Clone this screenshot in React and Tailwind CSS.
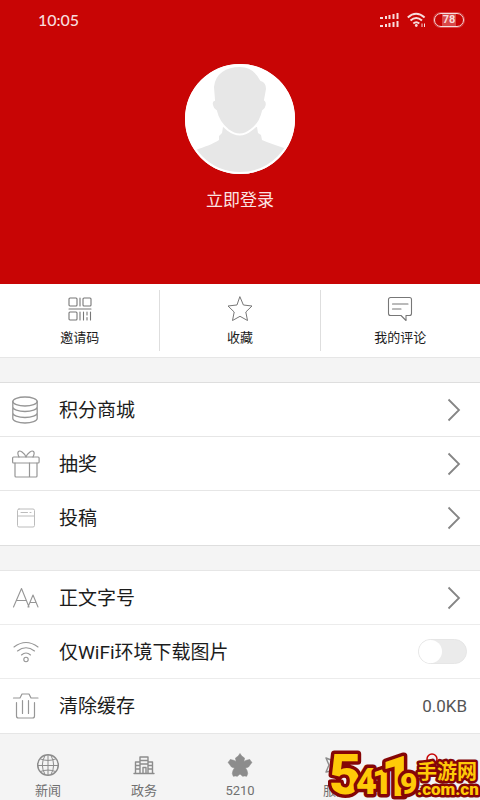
import React from "react";

const line = { fill: "none", stroke: "currentColor", strokeLinecap: "round", strokeLinejoin: "round" };

function QrIcon() {
  return (
    <svg width="24" height="24" viewBox="0 0 24 24" {...line} strokeWidth="1.1" aria-hidden="true">
      <rect x="1" y="1" width="8" height="8" rx="1" />
      <rect x="15" y="1" width="8" height="8" rx="1" />
      <path d="M12 1v8M1 12h22M12 15v8M15.500 15v8M19 15v3M19 20.500v2.500M22.500 15v8" />
      <rect x="1" y="15" width="8" height="8" rx="1" />
    </svg>
  );
}

function StarIcon() {
  return (
    <svg width="26" height="26" viewBox="0 0 26 26" {...line} strokeWidth="1" aria-hidden="true">
      <path d="M13 1l3.400 8 8.600 1-6.200 6 1.700 8.500L13 20.300 5.500 24.500 7.200 16 1 10l8.600-1z" />
    </svg>
  );
}

function CommentIcon() {
  return (
    <svg width="26" height="26" viewBox="0 0 26 26" {...line} strokeWidth="1.1" aria-hidden="true">
      <path d="M3.500 1.500h19a2 2 0 0 1 2 2v14a2 2 0 0 1-2 2H19v5l-5-5H3.500a2 2 0 0 1-2-2v-14a2 2 0 0 1 2-2zM5.500 8h15.500M5.500 13h8.500" />
    </svg>
  );
}

function CoinsIcon() {
  return (
    <svg width="28" height="28" viewBox="0 0 28 28" {...line} strokeWidth="1.300" aria-hidden="true">
      <ellipse cx="13" cy="5.500" rx="12.200" ry="4.500" />
      <path d="M.8 5.500v17c0 2.500 5.500 4.500 12.200 4.500s12.200-2 12.200-4.500v-17M.8 11c0 2.500 5.500 4.500 12.200 4.500s12.200-2 12.200-4.500M.8 17c0 2.500 5.500 4.500 12.200 4.500s12.200-2 12.200-4.500" />
    </svg>
  );
}

function GiftIcon() {
  return (
    <svg width="28" height="28" viewBox="0 0 28 28" {...line} strokeWidth="1.200" aria-hidden="true">
      <rect x=".6" y="7" width="26.500" height="6" rx="1" />
      <path d="M3 13v13a1 1 0 0 0 1 1h20a1 1 0 0 0 1-1V13M17.500 13v14M14 7C12 2.500 8 0 6.500 1.500 5 3 6 5 7 7M14 7c2-4.500 6-7 7.500-5.500C23 3 22 5 21 7" />
    </svg>
  );
}

function DraftIcon() {
  return (
    <svg width="28" height="28" viewBox="0 0 28 28" {...line} strokeWidth="1" className="text-[#bcbcbc]" aria-hidden="true">
      <rect x="5.500" y="5" width="17" height="18" rx="1.500" />
      <path d="M5.500 12h17M9 8.500h6.500M18 8.500h1" />
    </svg>
  );
}

function LettersIcon() {
  return (
    <svg width="28" height="28" viewBox="0 0 28 28" {...line} strokeWidth="1.100" aria-hidden="true">
      <path d="M1.500 23L9.500 4.500 17 23M4.500 16.500h10M16 23l5-12 5 12M18 18.500h6" />
    </svg>
  );
}

function WifiIcon() {
  return (
    <svg width="28" height="28" viewBox="0 0 28 28" {...line} strokeWidth="1.100" aria-hidden="true">
      <path d="M2 9q12-9 24 0M5.500 13q8.500-6.500 17 0M9.500 17q4.500-4 9 0" />
      <circle cx="14" cy="21.500" r="2.200" />
    </svg>
  );
}

function TrashIcon() {
  return (
    <svg width="28" height="28" viewBox="0 0 28 28" {...line} strokeWidth="1.200" aria-hidden="true">
      <path d="M1.500 6H8l2-4h7l2 4h7M4.500 10.500V24a2 2 0 0 0 2 2h14a2 2 0 0 0 2-2V10.500M10.500 8.500v13M16.500 8.500v13" />
    </svg>
  );
}

function GlobeIcon() {
  return (
    <svg width="24" height="24" viewBox="0 0 24 24" {...line} strokeWidth="1" aria-hidden="true">
      <circle cx="12" cy="12" r="10.300" strokeWidth="1.500" />
      <path d="M12 2v20M2 12.500h20M4.500 6q7.500 3 15 0M4.500 18.500q7.500-3 15 0M9 2.500Q3.500 12 9 21.500M15 2.500q5.500 9.500 0 19" />
    </svg>
  );
}

function BuildingIcon() {
  return (
    <svg width="24" height="24" viewBox="0 0 24 24" {...line} strokeWidth="1.400" aria-hidden="true">
      <path d="M2 20.500h20M3.500 20V9H8M20.500 20V9H16M8 20V4h8v16M8 7.500h8M8 11h8M3.500 12.500H8M3.500 16H8M16 12.500h4.500M16 16h4.500M11 20v-5.500h3V20" />
    </svg>
  );
}

function FlowerIcon() {
  return (
    <svg width="26" height="26" viewBox="0 0 26 26" fill="currentColor" stroke="currentColor" strokeWidth=".6" strokeLinejoin="round" aria-hidden="true">
      <path d="M13 1.500l1.700 2.500 2.800 2-.6 3.500 2.500-1.200 3.400-.8.700 1.500 1.500 1.300-1.500 2L21.500 15 18.500 16l1.500 2.500.7 3-1 2.800-2-.4-2 .4L13 22l-2.700 2.300-2-.4-2 .4-1-2.800.7-3L7.500 16l-3-1-2-2.700L1 10.300 2.500 9l.7-1.500 3.400.8 2.500 1.200L8.500 6l2.800-2z" />
    </svg>
  );
}

function ServiceIcon() {
  return (
    <svg width="24" height="24" viewBox="0 0 24 24" {...line} strokeWidth="1.400" aria-hidden="true">
      <path d="M2 5l5 2 5-5 5 5 5-2-3 7 3 7-5-1-5 4-5-4-5 1 3-7z" />
    </svg>
  );
}

function PersonIcon() {
  return (
    <svg width="24" height="24" viewBox="0 0 24 24" {...line} strokeWidth="1.500" className="text-[#c80505]" aria-hidden="true">
      <circle cx="12" cy="6" r="5" />
      <path d="M2 22q1-9 10-9t10 9z" />
    </svg>
  );
}

function Chevron() {
  return (
    <svg width="14" height="24" viewBox="0 0 14 24" fill="none" stroke="#858585" strokeWidth="1.800" aria-hidden="true">
      <path d="M1.500 1.500L12 12 1.500 22.500" />
    </svg>
  );
}

function StatusBar() {
  return (
    <div className="flex h-10 items-center justify-between pr-4 pl-[38px] text-[#f7dcdc]">
      <span className="font-[Lato,sans-serif] text-[16px] leading-5 font-medium">10:05</span>
      <div className="flex items-center gap-2">
        <svg width="19" height="14" viewBox="0 0 19 14" fill="currentColor" aria-hidden="true">
          <path d="M0 4h3v2H0zM5 3h2v3H5zM8.500 2h2v4h-2zM12.500 1h2v5h-2zM16.500 0h2v6h-2zM0 12h3v2H0zM5 11h2v3H5zM8.500 10h2v4h-2zM12.500 9h2v5h-2zM16.500 8h2v6h-2z" />
        </svg>
        <svg width="19" height="16" viewBox="0 0 19 16" fill="none" stroke="currentColor" strokeWidth="2" aria-hidden="true">
          <path d="M.8 5.500q8.200-7.500 16.800 0M3.500 8.500q5.700-5 11.500 0M6.300 11.500q3-2.500 6 0" />
          <circle cx="9.300" cy="13.500" r="1.400" fill="currentColor" stroke="none" />
          <path d="M15 11.500v3.500M17.500 11.500v3.500" strokeWidth="1" />
        </svg>
        <span className="flex h-[14px] w-[30px] items-center justify-center rounded-full border border-current text-[11px] leading-3 font-bold ring-1 ring-[#f7dcdc]/30">
          <span className="bg-[#d94848] px-px">78</span>
        </span>
      </div>
    </div>
  );
}

function Avatar() {
  return (
    <svg width="112" height="112" viewBox="0 0 112 112" aria-hidden="true">
      <defs>
        <clipPath id="avatar">
          <circle cx="56" cy="56" r="55" />
        </clipPath>
      </defs>
      <circle cx="56" cy="56" r="55" fill="#fff" />
      <g clipPath="url(#avatar)" fill="#e7e7e7">
        <path d="M39 64l-1 6-3 3v4c-6 4-15 7-23 10L0 92v20h112V92l-12-7c-8-3-16-5-22-8l-1-5-3-2-1-6z" />
        <path
          d="M56 3C42 3 30 10 29 24l1 13c-4 1-2 9 2 11 2 9 7 15 12 19q12 9 23 0c6-4 10-10 12-19 4-2 5-9 2-11l2-11c0-5-2-8-6-9C73 9 66 3 56 3z"
          stroke="#fff"
          strokeWidth="2"
        />
      </g>
      <circle cx="56" cy="56" r="54" fill="none" stroke="#fff" strokeWidth="2" />
    </svg>
  );
}

const shortcuts = [
  { label: "邀请码", Icon: QrIcon },
  { label: "收藏", Icon: StarIcon },
  { label: "我的评论", Icon: CommentIcon },
];

const tabs = [
  { label: "新闻", Icon: GlobeIcon },
  { label: "政务", Icon: BuildingIcon },
  { label: "5210", Icon: FlowerIcon },
  { label: "服务", Icon: ServiceIcon },
  { label: "我的", Icon: PersonIcon },
];

const rowClass = "flex h-[54px] w-full items-center pr-[13px] pl-3 text-left";

function RowBody({ Icon, label, children }) {
  return (
    <>
      <span className="w-[47px] shrink-0 text-[#969696]">
        <Icon />
      </span>
      <span className="flex-1 pt-0.5 text-[19px] leading-7">{label}</span>
      {children}
    </>
  );
}

function LinkRow({ Icon, label }) {
  return (
    <button type="button" className={rowClass}>
      <RowBody Icon={Icon} label={label}>
        <span className="mr-1.5">
          <Chevron />
        </span>
      </RowBody>
    </button>
  );
}

function Watermark() {
  return (
    <svg
      width="152"
      height="56"
      viewBox="0 0 152 56"
      className="absolute right-0 bottom-0"
      fill="#ffca08"
      stroke="#850606"
      strokeLinejoin="round"
      paintOrder="stroke"
      fontFamily="Roboto, sans-serif"
      fontWeight="900"
    >
      <g strokeWidth="7">
        <text x="1" y="49" fontSize="56">5</text>
        <text x="28" y="49" fontSize="36">4</text>
        <text x="44" y="49" fontSize="36">1</text>
        <text x="53" y="51" fontSize="56">1</text>
        <text x="72" y="49" fontSize="30">9</text>
      </g>
      <g strokeWidth="5">
        <text x="89" y="34" fontSize="20" fontFamily="Noto Sans CJK SC, sans-serif" fontWeight="700">手游网</text>
        <text x="89" y="50" fontSize="17">.com.cn</text>
      </g>
    </svg>
  );
}

export default function App() {
  return (
    <div className="relative flex min-h-screen flex-col bg-[#f4f4f4] font-[Roboto,'Noto_Sans_CJK_SC',sans-serif] text-[#1c1c1c]">
      <header className="bg-[#c80505] pb-[70px]">
        <StatusBar />
        <button type="button" className="mx-auto mt-[23px] flex flex-col items-center gap-[11px] text-[17px] leading-7 text-[#fbe4e4]">
          <Avatar />
          立即登录
        </button>
      </header>

      <main className="flex-1">
        <nav className="flex border-b border-[#e6e6e6] bg-white py-1.5">
          {shortcuts.map(({ label, Icon }, i) => (
            <button
              key={label}
              type="button"
              className={`flex h-[61px] flex-1 flex-col items-center justify-between pt-[5px] pb-[3px] text-[13px] leading-5 ${i < 2 ? "border-r border-[#dedede]" : ""}`}
            >
              <span className="flex h-7 items-center text-[#777777]">
                <Icon />
              </span>
              {label}
            </button>
          ))}
        </nav>

        <section className="mt-6 divide-y divide-[#e6e6e6] border-y border-[#dedede] bg-white">
          <LinkRow Icon={CoinsIcon} label="积分商城" />
          <LinkRow Icon={GiftIcon} label="抽奖" />
          <LinkRow Icon={DraftIcon} label="投稿" />
        </section>

        <section className="mt-6 divide-y divide-[#ececec] border-y border-[#e6e6e6] bg-white">
          <LinkRow Icon={LettersIcon} label="正文字号" />
          <label className={rowClass}>
            <RowBody Icon={WifiIcon} label="仅WiFi环境下载图片">
              <input type="checkbox" role="switch" className="peer sr-only" />
              <span className="flex h-[25px] w-[49px] rounded-full border border-[#e6e6e6] bg-[#ebebeb] peer-checked:justify-end">
                <span className="size-[23px] rounded-full bg-white" />
              </span>
            </RowBody>
          </label>
          <button type="button" className={rowClass}>
            <RowBody Icon={TrashIcon} label="清除缓存">
              <span className="pt-0.5 text-[17px] text-[#555555]">0.0KB</span>
            </RowBody>
          </button>
        </section>
      </main>

      <nav className="flex h-[67px] text-[#707070]">
        {tabs.map(({ label, Icon }) => (
          <a key={label} href="#" className="flex flex-1 flex-col items-center justify-end gap-px text-[13px] leading-5">
            <span className="flex h-[30px] items-center text-[#8c8c8c]">
              <Icon />
            </span>
            {label}
          </a>
        ))}
      </nav>
      <Watermark />
    </div>
  );
}
